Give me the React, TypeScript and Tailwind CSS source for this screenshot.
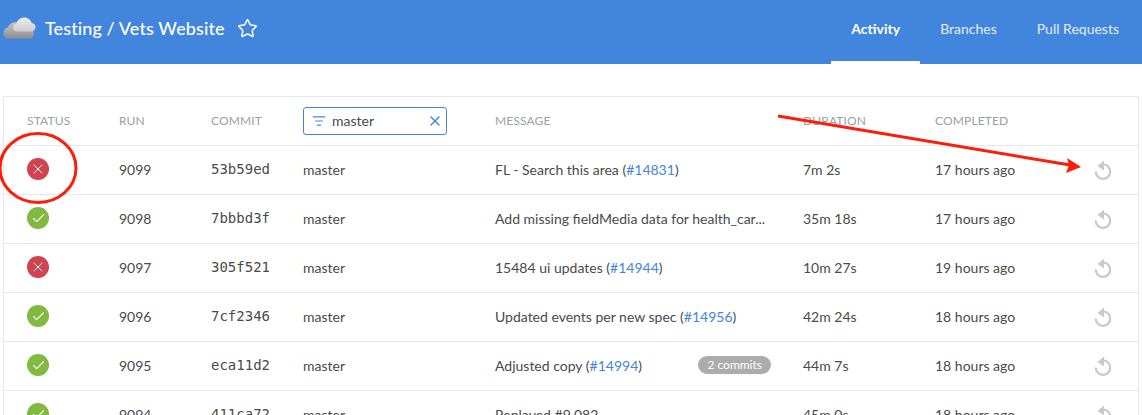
import { Check, ListFilter, Star, X } from "lucide-react";

type Run = {
  ok: boolean;
  run: number;
  commit: string;
  message: string;
  pr?: string;
  commits?: string;
  duration: string;
  completed: string;
};

const runs: Run[] = [
  { ok: false, run: 9099, commit: "53b59ed", message: "FL - Search this area", pr: "#14831", duration: "7m 2s", completed: "17 hours ago" },
  { ok: true, run: 9098, commit: "7bbbd3f", message: "Add missing fieldMedia data for health_car...", duration: "35m 18s", completed: "17 hours ago" },
  { ok: false, run: 9097, commit: "305f521", message: "15484 ui updates", pr: "#14944", duration: "10m 27s", completed: "19 hours ago" },
  { ok: true, run: 9096, commit: "7cf2346", message: "Updated events per new spec", pr: "#14956", duration: "42m 24s", completed: "18 hours ago" },
  { ok: true, run: 9095, commit: "eca11d2", message: "Adjusted copy", pr: "#14994", commits: "2 commits", duration: "44m 7s", completed: "18 hours ago" },
  { ok: true, run: 9094, commit: "411ca72", message: "Replaved #9,082", duration: "45m 0s", completed: "18 hours ago" },
];

const gridCols = "grid grid-cols-[92px_92px_92px_192px_308px_132px_1fr_60px] items-center pl-[23px]";

const Cloud = () => (
  <svg width="34" height="22" viewBox="0 0 34 22" className="shrink-0">
    <defs>
      <linearGradient id="cloudBack" x1="0" y1="0" x2="0" y2="1">
        <stop offset="0" stopColor="#c4c4c4" />
        <stop offset="1" stopColor="#8f8f8f" />
      </linearGradient>
      <linearGradient id="cloudFront" x1="0" y1="0" x2="0" y2="1">
        <stop offset="0" stopColor="#eeeeee" />
        <stop offset="1" stopColor="#cccccc" />
      </linearGradient>
    </defs>
    <path d="M7 21.500a5.500 5.500 0 0 1-1.500-10.800C7.500 6.500 11 4.500 15 5.500c4 .8 7 3.500 8 7h4.500a4.500 4.500 0 0 1 0 9Z" fill="url(#cloudBack)" />
    <path d="M15 14.500a4 4 0 0 1-.8-7.900C15.500 2.500 19 .5 22.500.5c3.500 0 6.500 2.500 7.300 5.500a4.300 4.300 0 0 1 3.700 4.200c0 2.400-1.900 4.300-4.300 4.300Z" fill="url(#cloudFront)" />
  </svg>
);

const StatusIcon = ({ ok }: { ok: boolean }) => (
  <div className={`w-[22px] h-[22px] rounded-full flex items-center justify-center ${ok ? "bg-[#82b940]" : "bg-[#d0434f]"}`}>
    {ok ? <Check size={15} strokeWidth={1.75} className="text-white" /> : <X size={16} strokeWidth={1.5} className="text-white" />}
  </div>
);

const Rerun = () => (
  <svg width="20" height="22" viewBox="0 0 20 22" fill="none" className="text-[#c9c9c9] mt-[2px]">
    <path d="M2.800 12.500a7.200 7.200 0 1 0 8.200-7" stroke="currentColor" strokeWidth="2.200" />
    <path d="M11 1.500 4.500 7 11 11.500Z" fill="currentColor" />
  </svg>
);

export default function App() {
  return (
    <div className="relative h-[415px] overflow-hidden bg-white font-['Lato','Liberation_Sans',sans-serif] text-[14px] text-[#4a4a4a]">
      {/* Top bar */}
      <header className="h-16 bg-[#4285dc] flex items-start text-white">
        <div className="flex items-center h-[56px] pl-[2px]">
          <Cloud />
          <span className="ml-[9px] text-[18px] font-medium tracking-[0.1px]">Testing / Vets Website</span>
          <Star size={21} strokeWidth={1.75} className="ml-[12px]" />
        </div>
        <nav className="ml-auto flex h-16">
          <div className="w-[89px] h-16 flex items-start justify-center pt-[18px] font-bold border-b-[3px] border-white">Activity</div>
          <div className="ml-[20px] pt-[18px] text-[#e3edfa]">Branches</div>
          <div className="ml-[40px] mr-[23px] pt-[18px] text-[#e3edfa]">Pull Requests</div>
        </nav>
      </header>

      {/* Runs table */}
      <main className="pt-8 px-[3px]">
        <div className="border border-b-0 border-[#e3e8ee] rounded-t-[3px]">
          <div className={`${gridCols} h-12 text-[12px] text-[#9aa0a8] tracking-[0.15px]`}>
            <div>STATUS</div>
            <div>RUN</div>
            <div>COMMIT</div>
            <div className="pr-12">
              <div className="w-[144px] h-[28px] pb-px border border-[#4285dc] rounded-[3px] flex items-center pl-2 pr-[3px] text-[14px] text-[#4a4a4a] tracking-normal">
                <ListFilter size={14} className="text-[#4285dc]" />
                <span className="ml-[6px]">master</span>
                <X size={16} strokeWidth={2} className="ml-auto text-[#4285dc]" />
              </div>
            </div>
            <div>MESSAGE</div>
            <div>DURATION</div>
            <div>COMPLETED</div>
          </div>

          {runs.map((r) => (
            <div key={r.run} className={`${gridCols} h-[49px] pb-[2px] border-t border-[#e3e8ee]`}>
              <StatusIcon ok={r.ok} />
              <div>{r.run}</div>
              <div className="font-['DejaVu_Sans_Mono',monospace] text-[14px]">{r.commit}</div>
              <div>master</div>
              <div className="flex items-center pr-8 whitespace-nowrap">
                <span>
                  {r.message}
                  {r.pr && (
                    <>
                      {" ("}
                      <span className="text-[#4285dc]">{r.pr}</span>
                      {")"}
                    </>
                  )}
                </span>
                {r.commits && (
                  <span className="ml-auto h-[18px] px-[9px] rounded-full bg-[#acacac] text-white text-[12px] flex items-center">
                    {r.commits}
                  </span>
                )}
              </div>
              <div>{r.duration}</div>
              <div>{r.completed}</div>
              <div className="flex justify-center pr-[10px]">
                <Rerun />
              </div>
            </div>
          ))}
        </div>
      </main>

      {/* Annotation drawn over the screenshot */}
      <svg className="absolute inset-0 pointer-events-none" width="1142" height="415" fill="none">
        <ellipse cx="38" cy="168" rx="38" ry="34.500" stroke="#fb1e0a" strokeWidth="3" />
        <path d="M778 116 L1070 165" stroke="#fb1e0a" strokeWidth="3" />
        <path d="M1081 167 L1067 158 L1069 165 L1066 173 Z" fill="#fb1e0a" />
      </svg>
    </div>
  );
}
